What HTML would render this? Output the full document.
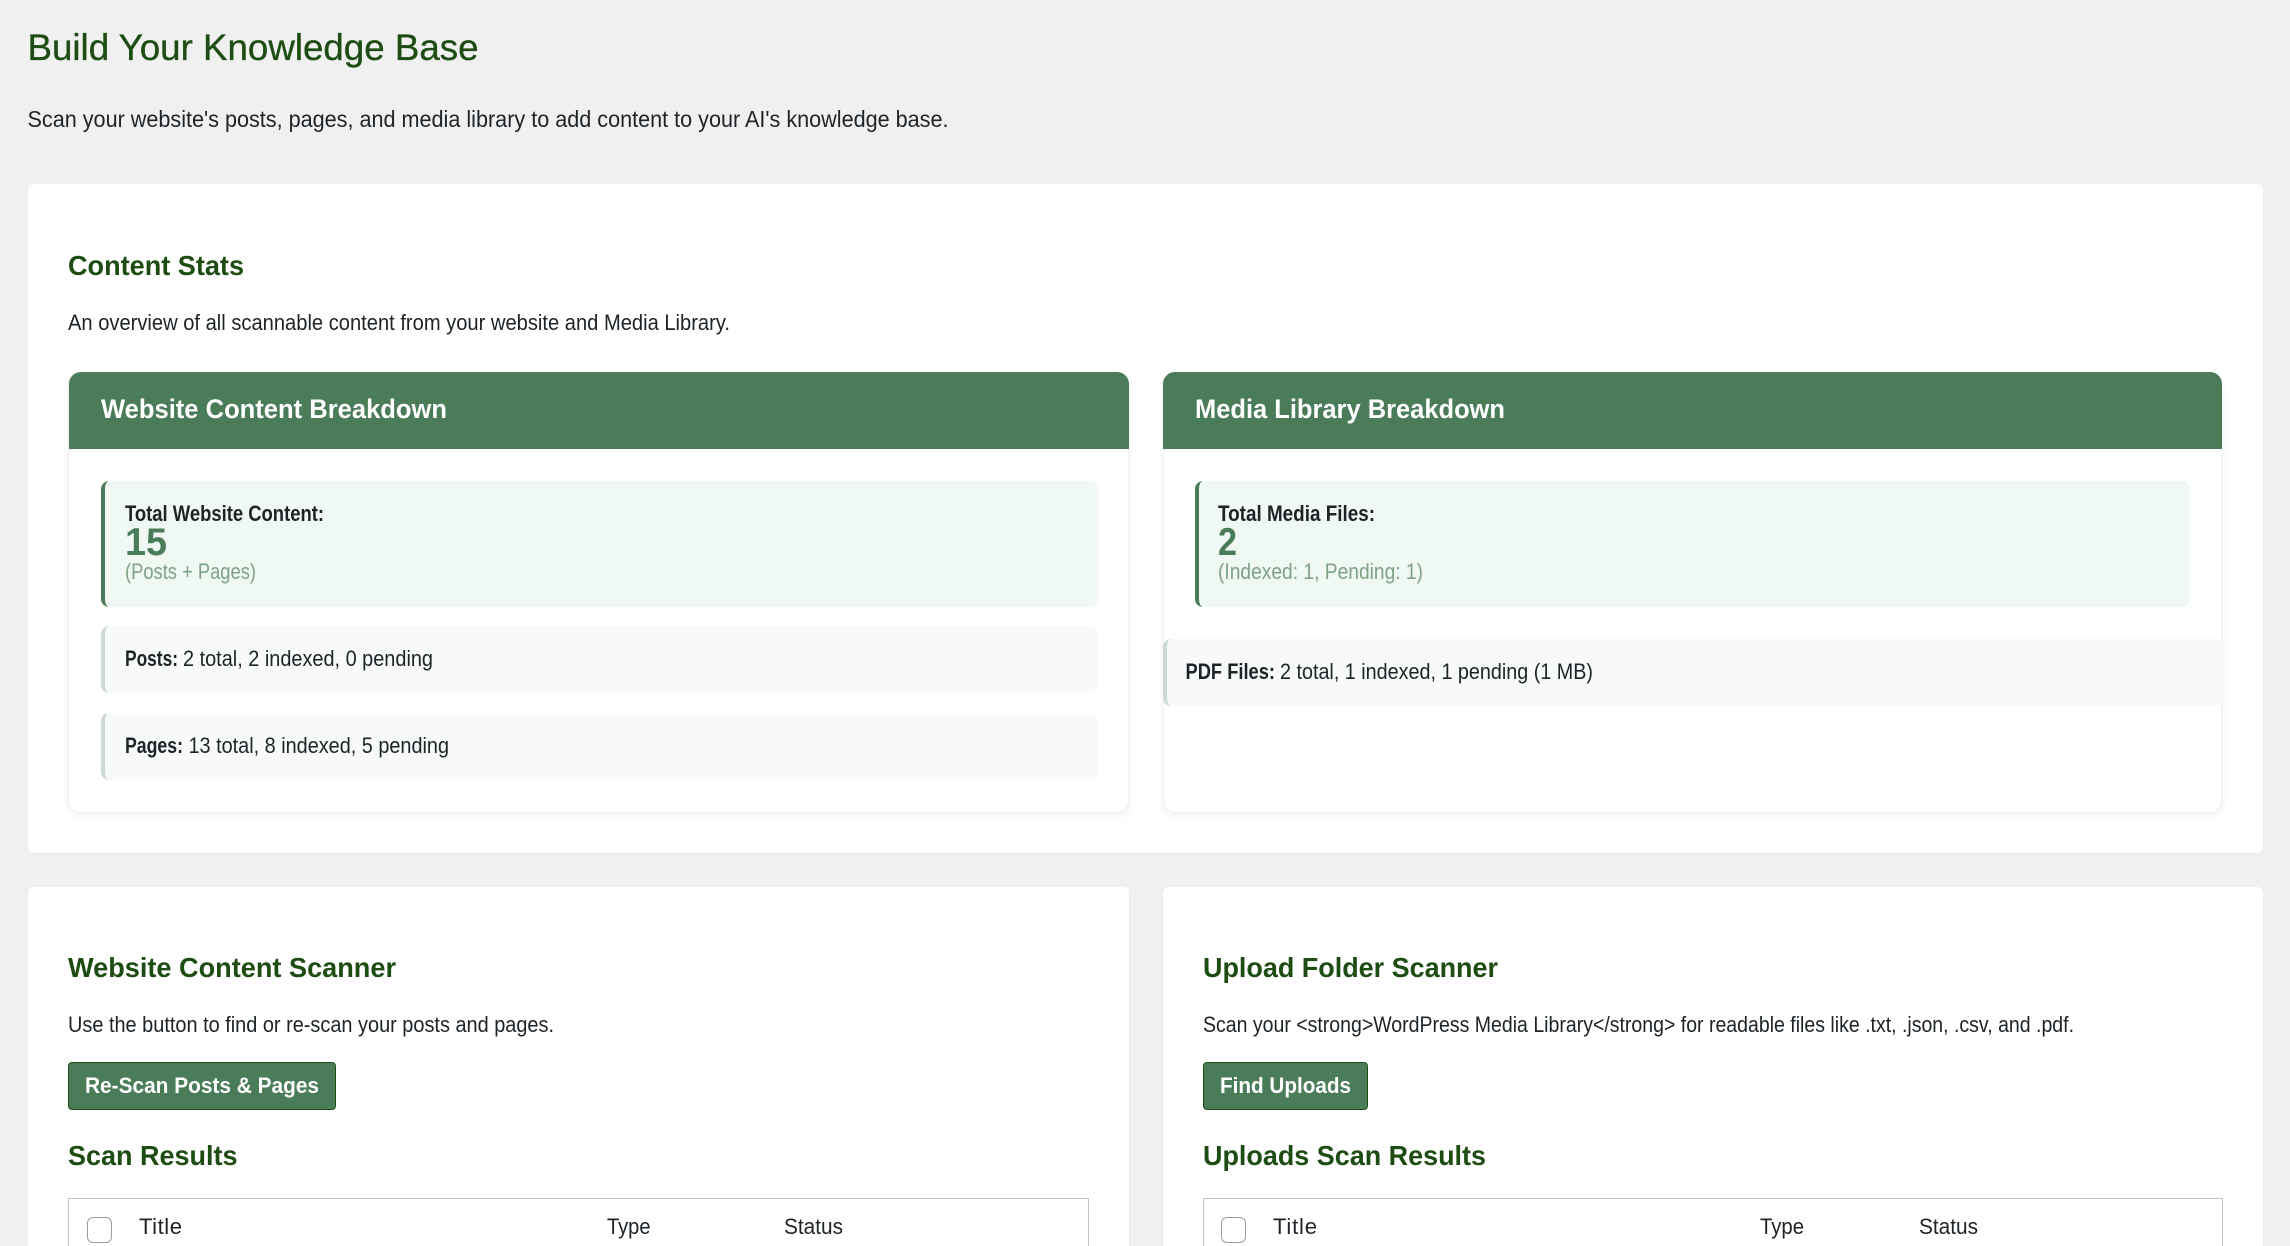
<!DOCTYPE html>
<html lang="en"><head><meta charset="utf-8"><title>Build Your Knowledge Base</title>
<style>
html,body{margin:0;padding:0;width:2290px;height:1246px;overflow:hidden;background:#f0f0f1}
body{position:relative;font-family:"Liberation Sans",sans-serif}
.b{position:absolute;box-sizing:border-box}
.card{background:#fff;border-radius:6px;box-shadow:0 1px 3px rgba(0,0,0,.03)}
.inner{background:#fff;border-radius:12px;border:1px solid #f0f1f0;box-shadow:0 3px 8px rgba(0,0,0,.06)}
.head{background:#4a7c59;border-radius:12px 12px 0 0}
.tot{background:#eff8f3;border-left:4px solid #4a7c59;border-radius:8px}
.it{background:#f8faf9;border-left:4px solid #ccdad2;border-radius:8px}
.btn{background:#4a7c59;border:1px solid #1e4d14;border-radius:4px}
.tbl{background:#fff;border:1px solid #c3c4c7;border-bottom:0}
.chk{background:#fff;border:1.5px solid #9a9da1;border-radius:6px}
svg{position:absolute;left:0;top:0}
text{font-family:"Liberation Sans",sans-serif;font-size:22px;fill:#1d2327}
.h1{font-size:37px;fill:#1e4d14;stroke:#1e4d14;stroke-width:.35px}
.h2{font-weight:700;font-size:28px;fill:#1e4d14}
.wh{font-weight:700;font-size:27px;fill:#fff}
.bt{font-weight:700;font-size:22px;fill:#fff}
.s{font-weight:700;fill:#1d2327}
.n{font-weight:700;font-size:39px;fill:#4a7c59}
.m{fill:#80a088}
</style></head><body>
<div class="b card" style="left:28px;top:184px;width:2235px;height:669px"></div>
<div class="b inner" style="left:68px;top:372px;width:1061px;height:441px"></div>
<div class="b head" style="left:69px;top:372px;width:1060px;height:77px"></div>
<div class="b tot" style="left:101px;top:481px;width:997px;height:126px"></div>
<div class="b it" style="left:101px;top:626px;width:997px;height:67px"></div>
<div class="b it" style="left:101px;top:713px;width:997px;height:67px"></div>
<div class="b inner" style="left:1163px;top:372px;width:1059px;height:441px"></div>
<div class="b head" style="left:1163px;top:372px;width:1059px;height:77px"></div>
<div class="b tot" style="left:1195px;top:481px;width:995px;height:126px"></div>
<div class="b it" style="left:1163px;top:639px;width:1059px;height:67px"></div>
<div class="b card" style="left:28px;top:887px;width:1101px;height:400px"></div>
<div class="b card" style="left:1163px;top:887px;width:1100px;height:400px"></div>
<div class="b btn" style="left:68px;top:1062px;width:268px;height:48px"></div>
<div class="b btn" style="left:1203px;top:1062px;width:165px;height:48px"></div>
<div class="b tbl" style="left:68px;top:1198px;width:1021px;height:60px"></div>
<div class="b tbl" style="left:1203px;top:1198px;width:1020px;height:60px"></div>
<div class="b chk" style="left:87px;top:1217px;width:25px;height:26px"></div>
<div class="b chk" style="left:1221px;top:1217px;width:25px;height:26px"></div>
<svg width="2290" height="1246" viewBox="0 0 2290 1246" xmlns="http://www.w3.org/2000/svg">
<text class="h1" x="27.500" y="60" textLength="451" lengthAdjust="spacingAndGlyphs">Build Your Knowledge Base</text>
<text x="27.500" y="127" textLength="921" lengthAdjust="spacingAndGlyphs" style="font-size:23px">Scan your website's posts, pages, and media library to add content to your AI's knowledge base.</text>
<text class="h2" x="68" y="275" textLength="176" lengthAdjust="spacingAndGlyphs">Content Stats</text>
<text x="68" y="330" textLength="662" lengthAdjust="spacingAndGlyphs">An overview of all scannable content from your website and Media Library.</text>
<text class="wh" x="101" y="418" textLength="346" lengthAdjust="spacingAndGlyphs">Website Content Breakdown</text>
<text class="wh" x="1195" y="418" textLength="310" lengthAdjust="spacingAndGlyphs">Media Library Breakdown</text>
<text class="s" x="125" y="521" textLength="199" lengthAdjust="spacingAndGlyphs">Total Website Content:</text>
<text class="n" x="125" y="555" textLength="42" lengthAdjust="spacingAndGlyphs">15</text>
<text class="m" x="125" y="579" textLength="131" lengthAdjust="spacingAndGlyphs">(Posts + Pages)</text>
<text class="s" x="125" y="666" textLength="53" lengthAdjust="spacingAndGlyphs">Posts:</text>
<text x="183" y="666" textLength="250" lengthAdjust="spacingAndGlyphs">2 total, 2 indexed, 0 pending</text>
<text class="s" x="125" y="753" textLength="58" lengthAdjust="spacingAndGlyphs">Pages:</text>
<text x="188.500" y="753" textLength="260.500" lengthAdjust="spacingAndGlyphs">13 total, 8 indexed, 5 pending</text>
<text class="s" x="1218" y="521" textLength="157" lengthAdjust="spacingAndGlyphs">Total Media Files:</text>
<text class="n" x="1218" y="555" textLength="19" lengthAdjust="spacingAndGlyphs">2</text>
<text class="m" x="1218" y="579" textLength="205" lengthAdjust="spacingAndGlyphs">(Indexed: 1, Pending: 1)</text>
<text class="s" x="1185.500" y="679" textLength="89.500" lengthAdjust="spacingAndGlyphs">PDF Files:</text>
<text x="1280" y="679" textLength="313" lengthAdjust="spacingAndGlyphs">2 total, 1 indexed, 1 pending (1 MB)</text>
<text class="h2" x="68" y="977" textLength="328" lengthAdjust="spacingAndGlyphs">Website Content Scanner</text>
<text x="68" y="1032" textLength="486" lengthAdjust="spacingAndGlyphs">Use the button to find or re-scan your posts and pages.</text>
<text class="bt" x="85" y="1093" textLength="234" lengthAdjust="spacingAndGlyphs">Re-Scan Posts &amp; Pages</text>
<text class="h2" x="68" y="1165" textLength="169.500" lengthAdjust="spacingAndGlyphs">Scan Results</text>
<text x="139" y="1234" textLength="43" lengthAdjust="spacing">Title</text>
<text x="607" y="1234" textLength="43.500" lengthAdjust="spacingAndGlyphs">Type</text>
<text x="784" y="1234" textLength="59" lengthAdjust="spacingAndGlyphs">Status</text>
<text class="h2" x="1203" y="977" textLength="295" lengthAdjust="spacingAndGlyphs">Upload Folder Scanner</text>
<text x="1203" y="1032" textLength="871" lengthAdjust="spacingAndGlyphs">Scan your &lt;strong&gt;WordPress Media Library&lt;/strong&gt; for readable files like .txt, .json, .csv, and .pdf.</text>
<text class="bt" x="1220" y="1093" textLength="131" lengthAdjust="spacingAndGlyphs">Find Uploads</text>
<text class="h2" x="1203" y="1165" textLength="283" lengthAdjust="spacingAndGlyphs">Uploads Scan Results</text>
<text x="1273" y="1234" textLength="44" lengthAdjust="spacing">Title</text>
<text x="1760" y="1234" textLength="44" lengthAdjust="spacingAndGlyphs">Type</text>
<text x="1919" y="1234" textLength="59" lengthAdjust="spacingAndGlyphs">Status</text>
</svg>
</body></html>
